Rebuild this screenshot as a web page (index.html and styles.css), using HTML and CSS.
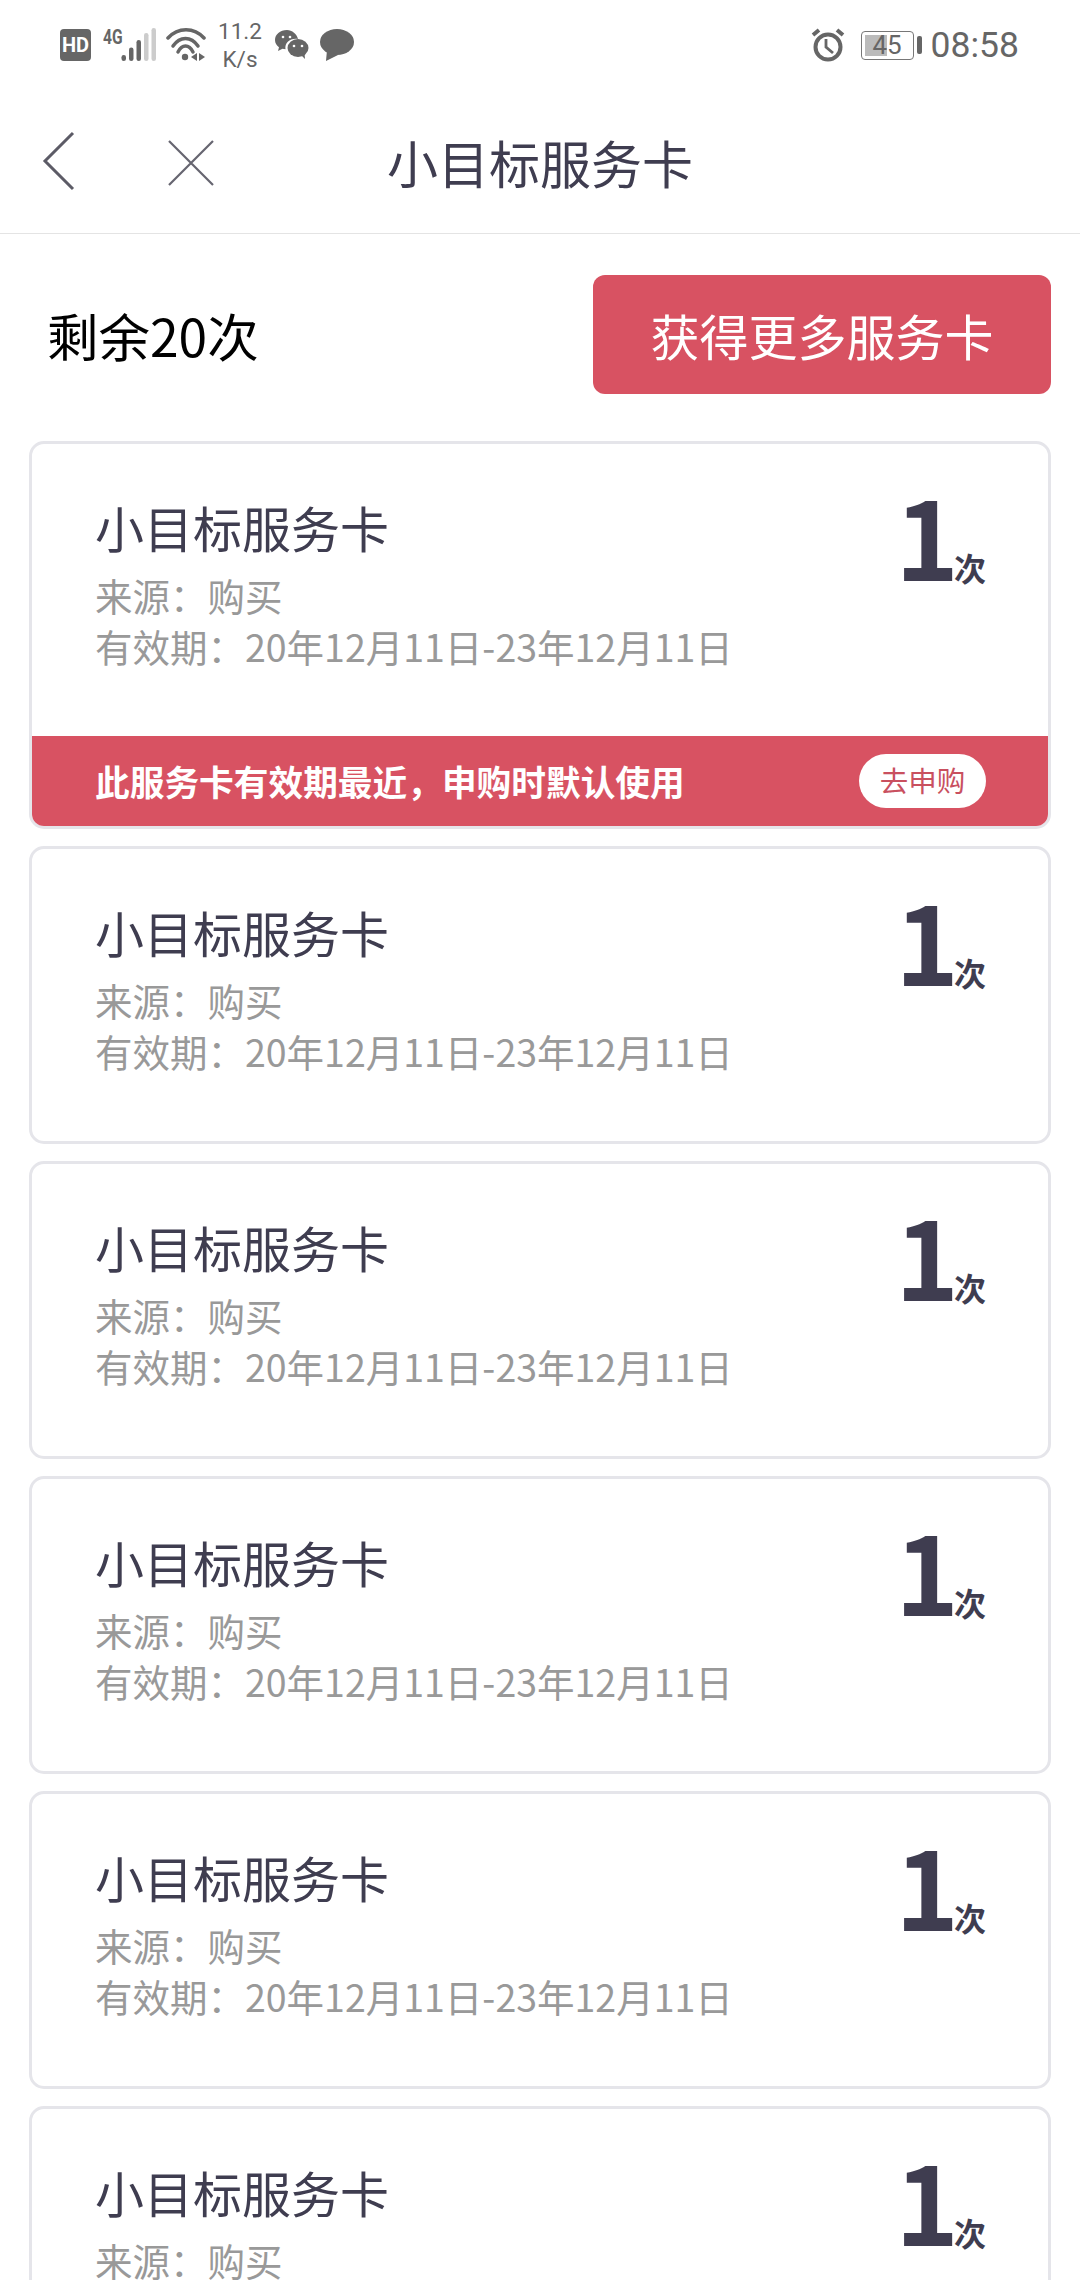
FILE: index.html
```html
<!DOCTYPE html>
<html lang="zh-CN">
<head>
    <meta charset="UTF-8">
    <meta name="viewport" content="width=device-width, initial-scale=1.0">
    <title>小目标服务卡</title>
    <link rel="stylesheet" href="styles.css">
</head>
<body>
    <div class="status-bar">
        <div class="status-left">
            <span class="hd">HD</span>
            <span class="net">4G</span>
            <svg class="signal" width="36" height="34" viewBox="0 0 36 34">
                <rect x="0.5" y="27" width="4.500" height="6" rx="2.200" fill="#666"/>
                <rect x="8" y="19.500" width="4.500" height="13.500" rx="2.200" fill="#666"/>
                <rect x="15.500" y="12" width="4.500" height="21" rx="2.200" fill="#666"/>
                <rect x="23" y="5" width="4.500" height="28" rx="2.200" fill="#ccc"/>
                <rect x="30.500" y="0" width="4.500" height="33" rx="2.200" fill="#ccc"/>
            </svg>
            <svg class="wifi" width="40" height="34" viewBox="0 0 40 34">
                <path d="M2 10C12 -1 28 -1 38 10" fill="none" stroke="#666" stroke-width="3.500" stroke-linecap="round"/>
                <path d="M7 18C14 8 25 8 32 18" fill="none" stroke="#666" stroke-width="3.500" stroke-linecap="round"/>
                <path d="M12 24C16 16 23 16 27 24" fill="none" stroke="#666" stroke-width="3.500" stroke-linecap="round"/>
                <circle cx="19" cy="29" r="3.200" fill="#666"/>
                <path d="M31 25v8l-6-4zM33 25v8l6-4z" fill="#666"/>
            </svg>
            <span class="speed">11.2<br>K/s</span>
            <svg class="wechat" width="34" height="30" viewBox="0 0 34 30">
                <path d="M12 0C5 0 0 4.500 0 10c0 3 1.500 5.500 4 7.300L3 21l4.500-2.200c1 .3 2 .4 3 .5C9.500 13 15 8 23 9 22 4 17 0 12 0z" fill="#666"/>
                <ellipse cx="23" cy="18" rx="10.500" ry="9" fill="#666"/>
                <path d="M26 25l4 4-.5-6z" fill="#666"/>
                <circle cx="8" cy="7" r="1.300" fill="#fff"/>
                <circle cx="15" cy="7" r="1.300" fill="#fff"/>
                <circle cx="19" cy="16" r="1.300" fill="#fff"/>
                <circle cx="27" cy="16" r="1.300" fill="#fff"/>
            </svg>
            <svg class="bubble" width="34" height="32" viewBox="0 0 34 32">
                <ellipse cx="17" cy="13" rx="17" ry="13" fill="#666"/>
                <path d="M7 21l-1 11 12-6z" fill="#666"/>
            </svg>
        </div>
        <div class="status-right">
            <svg class="alarm" width="34" height="34" viewBox="0 0 34 34">
                <circle cx="17" cy="19" r="12.500" fill="none" stroke="#666" stroke-width="4"/>
                <path d="M15 11v8l7 6" fill="none" stroke="#666" stroke-width="2.800"/>
                <path d="M2 7l6-5M32 7l-6-5" fill="none" stroke="#666" stroke-width="4"/>
            </svg>
            <div class="battery">
                <div class="battery-body">
                    <span class="battery-level"></span>
                    <span class="battery-num">45</span>
                </div>
                <span class="battery-tip"></span>
            </div>
            <span class="clock">08:58</span>
        </div>
    </div>

    <header class="nav">
        <svg class="nav-back" width="34" height="60" viewBox="0 0 34 60">
            <path d="M31 2L3 30l28 28" fill="none" stroke="#5c5b66" stroke-width="3"/>
        </svg>
        <svg class="nav-close" width="48" height="48" viewBox="0 0 48 48">
            <path d="M2 2l44 44M46 2L2 46" fill="none" stroke="#666570" stroke-width="2.200"/>
        </svg>
        <h1>小目标服务卡</h1>
    </header>

    <div class="summary">
        <span class="remain">剩余20次</span>
        <button class="more-btn">获得更多服务卡</button>
    </div>

    <div class="card-list">
        <div class="card card-first">
            <div class="card-body">
                <div>
                    <div class="card-title">小目标服务卡</div>
                    <div class="card-meta">来源：购买</div>
                    <div class="card-meta">有效期：20年12月11日-23年12月11日</div>
                </div>
                <div class="card-count"><b>1</b><span>次</span></div>
            </div>
            <div class="card-banner">
                <span>此服务卡有效期最近，申购时默认使用</span>
                <span class="banner-pill">去申购</span>
            </div>
        </div>
        <div class="card">
            <div class="card-body">
                <div>
                    <div class="card-title">小目标服务卡</div>
                    <div class="card-meta">来源：购买</div>
                    <div class="card-meta">有效期：20年12月11日-23年12月11日</div>
                </div>
                <div class="card-count"><b>1</b><span>次</span></div>
            </div>
        </div>
        <div class="card">
            <div class="card-body">
                <div>
                    <div class="card-title">小目标服务卡</div>
                    <div class="card-meta">来源：购买</div>
                    <div class="card-meta">有效期：20年12月11日-23年12月11日</div>
                </div>
                <div class="card-count"><b>1</b><span>次</span></div>
            </div>
        </div>
        <div class="card">
            <div class="card-body">
                <div>
                    <div class="card-title">小目标服务卡</div>
                    <div class="card-meta">来源：购买</div>
                    <div class="card-meta">有效期：20年12月11日-23年12月11日</div>
                </div>
                <div class="card-count"><b>1</b><span>次</span></div>
            </div>
        </div>
        <div class="card">
            <div class="card-body">
                <div>
                    <div class="card-title">小目标服务卡</div>
                    <div class="card-meta">来源：购买</div>
                    <div class="card-meta">有效期：20年12月11日-23年12月11日</div>
                </div>
                <div class="card-count"><b>1</b><span>次</span></div>
            </div>
        </div>
        <div class="card">
            <div class="card-body">
                <div>
                    <div class="card-title">小目标服务卡</div>
                    <div class="card-meta">来源：购买</div>
                    <div class="card-meta">有效期：20年12月11日-23年12月11日</div>
                </div>
                <div class="card-count"><b>1</b><span>次</span></div>
            </div>
        </div>
    </div>
</body>
</html>
```

FILE: styles.css
```css
* {
    box-sizing: border-box;
}

html, body {
    height: 2280px;
    overflow: hidden;
}

body {
    margin: 0;
    background-color: #fff;
    color: #3f3d50;
    font-family: "Noto Sans CJK SC", "Noto Sans", sans-serif;
}

.status-bar {
    height: 90px;
    padding: 22px 61px 0 60px;
    display: flex;
    justify-content: space-between;
    align-items: flex-start;
    color: #666;
    font-family: Roboto, sans-serif;
}

.status-left, .status-right {
    display: flex;
    align-items: center;
    height: 46px;
}

.hd {
    width: 31px;
    height: 32px;
    border-radius: 4px;
    background-color: #666;
    color: #fff;
    font-size: 20px;
    font-weight: 700;
    line-height: 32px;
    text-align: center;
}

.net {
    width: 18px;
    margin: -16px 0 0 12px;
    font-size: 20px;
    font-weight: 700;
    line-height: 20px;
    transform: scaleX(0.78);
    transform-origin: left center;
}

.wifi {
    margin-left: 9px;
}

.speed {
    width: 44px;
    margin-left: 12px;
    font-size: 22.500px;
    line-height: 28px;
    text-align: center;
}

.wechat {
    margin-left: 13px;
}

.bubble {
    margin-left: 11px;
}

.battery {
    display: flex;
    align-items: center;
    margin-left: 16px;
}

.battery-body {
    position: relative;
    width: 53px;
    height: 29px;
    border: 1.500px solid #777;
    border-radius: 4px;
    padding: 3px;
}

.battery-level {
    display: block;
    width: 50%;
    height: 100%;
    background-color: #bbb;
}

.battery-num {
    position: absolute;
    inset: 0;
    font-size: 26px;
    line-height: 26px;
    text-align: center;
}

.battery-tip {
    width: 5px;
    height: 18px;
    margin-left: 3px;
    border-radius: 2px;
    background-color: #666;
}

.clock {
    margin-left: 9px;
    font-size: 35.500px;
}

.nav {
    position: relative;
    height: 144px;
    border-bottom: 1px solid #e4e4e4;
    display: flex;
    justify-content: center;
    align-items: center;
}

.nav h1 {
    margin: 0;
    font-size: 51px;
    font-weight: 400;
}

.nav-back {
    position: absolute;
    left: 42px;
    top: 41px;
}

.nav-close {
    position: absolute;
    left: 167px;
    top: 49px;
}

.summary {
    height: 207px;
    padding: 41px 29px 0 47px;
    display: flex;
    justify-content: space-between;
    align-items: flex-start;
}

.remain {
    font-size: 51.500px;
    line-height: 119px;
    color: #000;
}

.more-btn {
    width: 458px;
    height: 119px;
    border: none;
    border-radius: 12px;
    background-color: #d85262;
    color: #fff;
    font-family: inherit;
    font-size: 49px;
}

.card-list {
    margin: 0 29px;
    display: flex;
    flex-direction: column;
    gap: 17.100px;
}

.card {
    height: 298px;
    flex-shrink: 0;
    border: 3px solid #e5e5ea;
    border-radius: 15px;
    background-color: #fff;
    overflow: hidden;
}

.card-first {
    height: 388px;
}

.card-body {
    height: 292px;
    padding: 49px 62px 0 63px;
    display: flex;
    justify-content: space-between;
    align-items: flex-start;
}

.card-title {
    margin-bottom: 8px;
    font-size: 49px;
    line-height: 68px;
}

.card-meta {
    color: #999;
    font-size: 37.500px;
    line-height: 51px;
}

.card-count {
    display: flex;
    align-items: baseline;
    margin-top: -24px;
}

.card-count b {
    font-size: 108px;
    line-height: 130px;
    font-weight: 700;
    letter-spacing: -5px;
}

.card-count span {
    font-size: 32px;
    font-weight: 700;
}

.card-banner {
    height: 90px;
    padding: 0 62px 0 63px;
    display: flex;
    justify-content: space-between;
    align-items: center;
    background-color: #d85262;
    color: #fff;
    font-size: 34.700px;
    font-weight: 700;
}

.banner-pill {
    width: 127px;
    height: 54px;
    border-radius: 27px;
    background-color: #fff;
    color: #c9505f;
    font-size: 28.500px;
    font-weight: 400;
    line-height: 52px;
    text-align: center;
}
```
